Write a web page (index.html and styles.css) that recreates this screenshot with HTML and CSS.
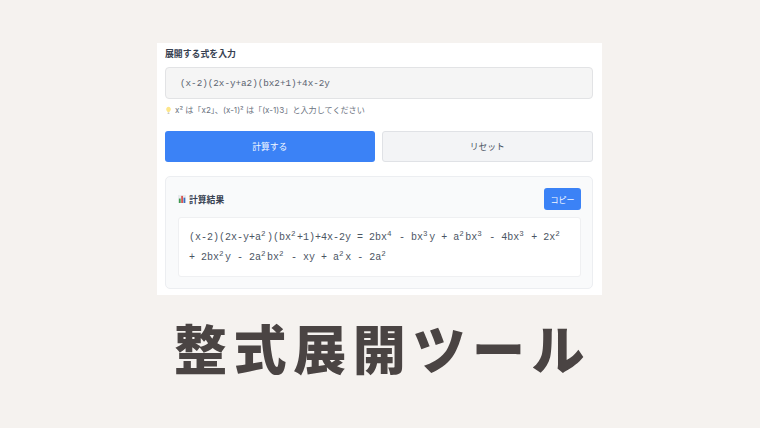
FILE: index.html
```html
<!DOCTYPE html>
<html lang="ja">
<head>
    <meta charset="UTF-8">
    <meta name="viewport" content="width=device-width, initial-scale=1.0">
    <title>整式展開ツール</title>
    <link rel="stylesheet" href="styles.css">
</head>
<body>
    <main class="tool">
        <label class="field-label" for="expr">展開する式を入力</label>
        <input type="text" id="expr" class="expr-input" value="(x-2)(2x-y+a2)(bx2+1)+4x-2y" readonly>
        <p class="hint">
            <svg class="hint-icon" viewBox="0 0 10 12" aria-hidden="true">
                <path d="M5 .8a3.4 3.4 0 0 0-2 6.1c.4.4.6.8.6 1.3h2.8c0-.5.2-.9.6-1.3A3.4 3.4 0 0 0 5 .8z" fill="#fde68a"/>
                <rect x="3.7" y="8.8" width="2.6" height="2" rx=".6" fill="#b6b6b0"/>
            </svg>
            x² は「x2」、(x-1)² は「(x-1)3」と入力してください
        </p>
        <div class="actions">
            <button class="btn btn-primary">計算する</button>
            <button class="btn btn-reset">リセット</button>
        </div>
        <section class="result">
            <div class="result-head">
                <h2 class="result-title">
                    <svg class="chart-icon" viewBox="0 0 9 9" aria-hidden="true">
                        <rect width="9" height="9" fill="#e8ebee"/>
                        <rect x="1" y="4" width="2" height="5" fill="#3f9b4f"/>
                        <rect x="3.6" y="1" width="2" height="8" fill="#d9534f"/>
                        <rect x="6.2" y="3" width="2" height="6" fill="#3b6fc4"/>
                    </svg>
                    計算結果
                </h2>
                <button class="copy-btn">コピー</button>
            </div>
            <div class="result-body">(x-2)(2x-y+a<sup>2</sup>)(bx<sup>2</sup>+1)+4x-2y = 2bx<sup>4</sup> - bx<sup>3</sup>y + a<sup>2</sup>bx<sup>3</sup> - 4bx<sup>3</sup> + 2x<sup>2</sup> + 2bx<sup>2</sup>y - 2a<sup>2</sup>bx<sup>2</sup> - xy + a<sup>2</sup>x - 2a<sup>2</sup></div>
        </section>
    </main>
    <h1 class="page-title">整式展開ツール</h1>
</body>
</html>
```
FILE: styles.css
```css
html, body {
    margin: 0;
    padding: 0;
}

body {
    width: 760px;
    height: 428px;
    overflow: hidden;
    padding: 43px 0 0 157px;
    box-sizing: border-box;
    background-color: #f5f2ef;
    font-family: Inter, "Noto Sans CJK JP", sans-serif;
}

.tool {
    width: 445px;
    height: 252px;
    box-sizing: border-box;
    padding: 4px 9px 0 8px;
    background-color: #fff;
}

.field-label {
    display: block;
    height: 13px;
    margin-bottom: 7px;
    font-size: 8.9px;
    line-height: 13px;
    font-weight: 700;
    color: #374151;
}

.expr-input {
    display: block;
    width: 100%;
    height: 32px;
    box-sizing: border-box;
    padding: 0 14px;
    border: 1px solid #e2e3e5;
    border-radius: 4px;
    background-color: #f5f5f5;
    font-family: "Liberation Mono", monospace;
    font-size: 9.25px;
    color: #5b6370;
    outline: none;
}

.hint {
    display: flex;
    align-items: center;
    gap: 3px;
    height: 12px;
    margin: 5px 0 15px;
    font-size: 8.1px;
    line-height: 12px;
    color: #6b7280;
}

.hint-icon {
    width: 7px;
    height: 9px;
}

.actions {
    display: flex;
    gap: 7px;
}

.btn {
    flex: 1;
    height: 31px;
    padding: 0;
    border-radius: 3px;
    font-family: inherit;
    font-size: 8.8px;
    cursor: pointer;
}

.btn-primary {
    border: none;
    background-color: #3b82f6;
    color: #f4f8ff;
}

.btn-reset {
    border: 1px solid #e0e2e6;
    background-color: #f3f4f6;
    color: #4b5563;
}

.result {
    height: 113px;
    box-sizing: border-box;
    margin-top: 14px;
    padding: 11px 11px 0 12px;
    border: 1px solid #eceef1;
    border-radius: 5px;
    background-color: #f9fafb;
}

.result-head {
    display: flex;
    justify-content: space-between;
    align-items: center;
    margin-bottom: 7px;
}

.result-title {
    display: flex;
    align-items: center;
    gap: 3px;
    margin: 0;
    font-size: 8.8px;
    font-weight: 700;
    color: #374151;
}

.chart-icon {
    width: 8px;
    height: 8px;
}

.copy-btn {
    width: 37px;
    height: 22px;
    padding: 0;
    border: none;
    border-radius: 3px;
    background-color: #3b82f6;
    color: #f4f8ff;
    font-family: inherit;
    font-size: 8px;
}

.result-body {
    height: 60px;
    box-sizing: border-box;
    padding: 10px 10px 0;
    border: 1px solid #eff0f2;
    border-radius: 3px;
    background-color: #fff;
    font-family: "Liberation Mono", monospace;
    font-size: 10px;
    line-height: 19.5px;
    color: #4b5563;
}

/* full character cell wide, the digit itself is smaller */
.result-body sup {
    font-size: 7.5px;
    line-height: 0;
    letter-spacing: 1.5px;
    vertical-align: 4px;
}

.page-title {
    width: 445px;
    margin: 17px 0 0 17px;
    font-family: "Noto Sans CJK JP", sans-serif;
    font-size: 53px;
    line-height: 70px;
    font-weight: 900;
    letter-spacing: 6.6px;
    white-space: nowrap;
    color: #4a4443;
}
```
